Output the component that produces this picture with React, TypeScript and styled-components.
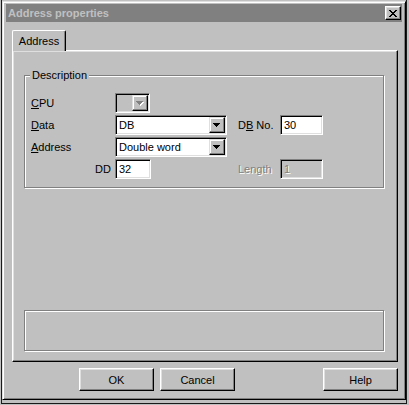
import styled, { createGlobalStyle } from 'styled-components';

const GlobalStyle = createGlobalStyle`
  html, body {
    margin: 0;
    padding: 0;
    background: #c0c0c0;
  }
  body {
    font-family: "Liberation Sans", Arial, sans-serif;
    font-size: 11px;
    color: #000;
  }
`;

// window layers
const Desktop = styled.div`
  width: 409px;
  height: 405px;
  box-sizing: border-box;
  overflow: hidden;
  background: #c0c0c0;
  padding-left: 1px;
`;

const BackWindow = styled.div`
  width: 406px;
  height: 404px;
  box-sizing: border-box;
  border: 1px solid #1a1a1a;
  border-top: none;
  padding-top: 1px;
`;

const Dialog = styled.div`
  width: 404px;
  height: 399px;
  box-sizing: border-box;
  background: #c0c0c0;
  border: 1px solid;
  border-color: #dfdfdf #000 #000 #dfdfdf;
  box-shadow: inset 1px 1px #fff, inset -1px -1px #808080;
  padding: 2px 3px 3px 3px;
  display: flex;
  flex-direction: column;
`;

const TitleBar = styled.div`
  height: 18px;
  flex: none;
  background: #808080;
  display: flex;
  align-items: center;
  padding: 0 1px 0 2px;
`;

const TitleText = styled.span`
  font-weight: bold;
  font-size: 11px;
  color: #c0c0c0;
  white-space: nowrap;
`;

const CloseButton = styled.div`
  margin-left: auto;
  width: 16px;
  height: 14px;
  box-sizing: border-box;
  background: #c0c0c0;
  border: 1px solid;
  border-color: #fff #000 #000 #fff;
  box-shadow: inset -1px -1px #808080, inset 1px 1px #dfdfdf;
  display: flex;
  align-items: center;
  justify-content: center;
`;

const Client = styled.div`
  flex: 1;
  padding: 8px 4px 0 6px;
  display: flex;
  flex-direction: column;
`;

// tabs
const TabStrip = styled.div`
  display: flex;
  height: 20px;
`;

const Tab = styled.div`
  position: relative;
  z-index: 1;
  width: 54px;
  height: 21px;
  box-sizing: border-box;
  background: #c0c0c0;
  border: 1px solid;
  border-color: #fff #000 transparent #fff;
  border-bottom: none;
  border-radius: 2px 2px 0 0;
  box-shadow: inset -1px 0 #808080;
  display: flex;
  align-items: center;
  justify-content: center;
`;

const Panel = styled.div`
  height: 312px;
  box-sizing: border-box;
  border: 1px solid;
  border-color: #fff #000 #000 #fff;
  box-shadow: inset -1px -1px #808080, inset 1px 1px #dfdfdf;
  padding: 24px 13px 10px 11px;
  display: flex;
  flex-direction: column;
  justify-content: space-between;
`;

// group boxes
const GroupBox = styled.div<{ $height: number }>`
  position: relative;
  height: ${p => p.$height}px;
  box-sizing: border-box;
  border: 1px solid #808080;
  box-shadow: inset 1px 1px #fff, 1px 1px #fff;
`;

const GroupLabel = styled.span`
  position: absolute;
  top: -7px;
  left: 5px;
  padding: 0 2px;
  line-height: 13px;
  background: #c0c0c0;
`;

const FieldGrid = styled.div`
  display: grid;
  grid-template-columns: 84px 112px 11px 42px 43px;
  grid-auto-rows: 20px;
  row-gap: 2px;
  padding: 17px 0 0 6px;
  align-items: center;
`;

const Label = styled.span<{ $col?: number; $align?: string; $disabled?: boolean }>`
  grid-column: ${p => p.$col ?? 1};
  justify-self: ${p => p.$align ?? 'start'};
  padding-right: ${p => (p.$align === 'end' ? '4px' : '0')};
  white-space: nowrap;
  color: ${p => (p.$disabled ? '#808080' : '#000')};
  text-shadow: ${p => (p.$disabled ? '1px 1px #fff' : 'none')};

  u {
    text-decoration: underline;
    text-underline-offset: 1px;
  }
`;

const Sunken = styled.div<{ $col?: number; $width?: number; $disabled?: boolean }>`
  grid-column: ${p => p.$col ?? 2};
  justify-self: start;
  width: ${p => (p.$width ? `${p.$width}px` : '100%')};
  height: 20px;
  box-sizing: border-box;
  border: 1px solid;
  border-color: #808080 #fff #fff #808080;
  box-shadow: inset 1px 1px #000, inset -1px -1px #dfdfdf;
  background: ${p => (p.$disabled ? '#c0c0c0' : '#fff')};
  padding: 1px;
  display: flex;
  align-items: center;
`;

const FieldText = styled.span<{ $disabled?: boolean }>`
  flex: 1;
  padding-left: 2px;
  white-space: nowrap;
  overflow: hidden;
  color: ${p => (p.$disabled ? '#808080' : '#000')};
  text-shadow: ${p => (p.$disabled ? '1px 1px #fff' : 'none')};
`;

const ArrowButton = styled.div`
  width: 16px;
  height: 100%;
  box-sizing: border-box;
  background: #c0c0c0;
  border: 1px solid;
  border-color: #dfdfdf #000 #000 #dfdfdf;
  box-shadow: inset -1px -1px #808080, inset 1px 1px #fff;
  display: flex;
  align-items: center;
  justify-content: center;
`;

// buttons
const ButtonRow = styled.div`
  display: flex;
  margin-top: 6px;
  padding-left: 67px;
  gap: 6px;
`;

const Button = styled.div<{ $push?: boolean }>`
  width: 75px;
  height: 23px;
  box-sizing: border-box;
  margin-left: ${p => (p.$push ? 'auto' : '0')};
  border: 1px solid;
  border-color: #fff #000 #000 #fff;
  box-shadow: inset -1px -1px #808080, inset 1px 1px #dfdfdf;
  display: flex;
  align-items: center;
  justify-content: center;
`;

function CloseGlyph() {
  return (
    <svg width="8" height="7" viewBox="0 0 8 7" shapeRendering="crispEdges">
      <path
        fill="#000"
        d="M0 0h2v1H0zM6 0h2v1H6zM1 1h2v1H1zM5 1h2v1H5zM2 2h4v1H2zM3 3h2v1H3zM2 4h4v1H2zM1 5h2v1H1zM5 5h2v1H5zM0 6h2v1H0zM6 6h2v1H6z"
      />
    </svg>
  );
}

function DownArrow({ disabled }: { disabled?: boolean }) {
  const tri = 'M0 0h7v1H0zM1 1h5v1H1zM2 2h3v1H2zM3 3h1v1H3z';
  return (
    <svg width="8" height="5" viewBox="0 0 8 5" shapeRendering="crispEdges">
      {disabled && <path fill="#fff" d={tri} transform="translate(1 1)" />}
      <path fill={disabled ? '#808080' : '#000'} d={tri} />
    </svg>
  );
}

function Combo({ value, width, disabled }: { value: string; width?: number; disabled?: boolean }) {
  return (
    <Sunken $width={width} $disabled={disabled}>
      <FieldText>{value}</FieldText>
      <ArrowButton>
        <DownArrow disabled={disabled} />
      </ArrowButton>
    </Sunken>
  );
}

export default function App() {
  return (
    <>
      <GlobalStyle />
      <Desktop>
        <BackWindow>
          <Dialog>
            <TitleBar>
              <TitleText>Address properties</TitleText>
              <CloseButton>
                <CloseGlyph />
              </CloseButton>
            </TitleBar>

            <Client>
              <TabStrip>
                <Tab>Address</Tab>
              </TabStrip>

              <Panel>
                <GroupBox $height={113}>
                  <GroupLabel>Description</GroupLabel>
                  <FieldGrid>
                    <Label><u>C</u>PU</Label>
                    <Combo value="" width={35} disabled />

                    <Label><u>D</u>ata</Label>
                    <Combo value="DB" />
                    <Label $col={4}>D<u>B</u> No.</Label>
                    <Sunken $col={5}>
                      <FieldText>30</FieldText>
                    </Sunken>

                    <Label><u>A</u>ddress</Label>
                    <Combo value="Double word" />

                    <Label $align="end">DD</Label>
                    <Sunken $width={36}>
                      <FieldText>32</FieldText>
                    </Sunken>
                    <Label $col={4} $disabled>Length</Label>
                    <Sunken $col={5} $disabled>
                      <FieldText $disabled>1</FieldText>
                    </Sunken>
                  </FieldGrid>
                </GroupBox>

                <GroupBox $height={41} />
              </Panel>

              <ButtonRow>
                <Button>OK</Button>
                <Button>Cancel</Button>
                <Button $push>Help</Button>
              </ButtonRow>
            </Client>
          </Dialog>
        </BackWindow>
      </Desktop>
    </>
  );
}
